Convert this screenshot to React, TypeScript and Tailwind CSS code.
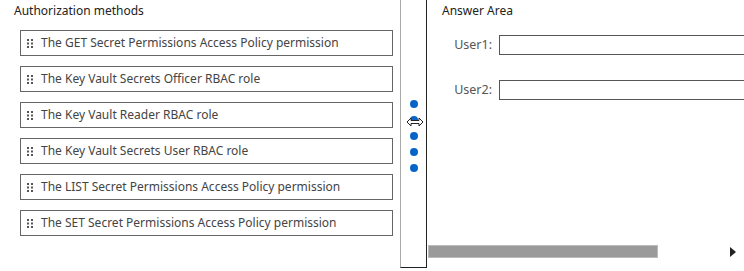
import React from 'react';

const items = [
  'The GET Secret Permissions Access Policy permission',
  'The Key Vault Secrets Officer RBAC role',
  'The Key Vault Reader RBAC role',
  'The Key Vault Secrets User RBAC role',
  'The LIST Secret Permissions Access Policy permission',
  'The SET Secret Permissions Access Policy permission',
];

const Grip: React.FC = () => (
  <svg width="6" height="9" viewBox="0 0 6 9" className="shrink-0">
    {[0, 1, 2].map((r) =>
      [0, 1].map((c) => <rect key={`${r}-${c}`} x={c * 4} y={r * 3.5} width="2" height="2" fill="#555" />)
    )}
  </svg>
);

const App: React.FC = () => {
  return (
    <div
      className="w-[744px] h-[271px] bg-white flex overflow-hidden text-[#333]"
      style={{ fontFamily: '"Noto Sans", "Open Sans", sans-serif' }}
    >
      {/* Left: choices */}
      <div className="w-[400px] shrink-0">
        <div className="pl-[14px] pt-[2px] text-[12px] leading-[18px] text-[#222]">Authorization methods</div>
        <div className="flex flex-col gap-[10px] pl-[20px] pr-[7px] mt-[10px]">
          {items.map((t) => (
            <div
              key={t}
              className="h-[26px] border border-[#666] flex items-center gap-[8px] pl-[6px] text-[12px] text-[#444]"
            >
              <Grip />
              <span>{t}</span>
            </div>
          ))}
        </div>
      </div>

      {/* Divider */}
      <div className="w-[27px] h-[268px] shrink-0 border-l border-l-[#aaa] border-r border-r-[#222] border-b border-b-[#222] relative">
        <div className="flex flex-col items-center gap-[8px] pt-[100px]">
          {[0, 1, 2, 3, 4].map((i) => (
            <div key={i} className="w-[8px] h-[8px] rounded-full bg-[#0a64c8]" />
          ))}
        </div>
        <svg
          className="absolute left-[5px] top-[117px]"
          width="18"
          height="10"
          viewBox="0 0 18 10"
        >
          <path
            d="M1 5 L5 1 L5 3.5 L13 3.5 L13 1 L17 5 L13 9 L13 6.5 L5 6.5 L5 9 Z"
            fill="white"
            stroke="#222"
            strokeWidth="1"
            strokeLinejoin="round"
          />
        </svg>
      </div>

      {/* Right: answer area */}
      <div className="flex-1 flex flex-col relative">
        <div className="pl-[15px] pt-[2px] text-[12px] leading-[18px] text-[#222]">Answer Area</div>
        <div className="flex flex-col gap-[25px] mt-[15px]">
          {['User1:', 'User2:'].map((u) => (
            <div key={u} className="flex items-center">
              <div className="w-[72px] pr-[7px] text-right text-[12.5px] text-[#555]">{u}</div>
              <div className="flex-1 h-[20px] border border-[#555] border-r-0" />
            </div>
          ))}
        </div>
        <div className="mt-auto mb-[13px] flex items-center">
          <div className="w-[230px] h-[13px] ml-[1px] bg-[#9a9a9a] border border-[#bbb]" />
          <div className="ml-auto mr-[8px] w-0 h-0 border-y-[5px] border-y-transparent border-l-[6px] border-l-[#222]" />
        </div>
      </div>
    </div>
  );
};

export default App;
